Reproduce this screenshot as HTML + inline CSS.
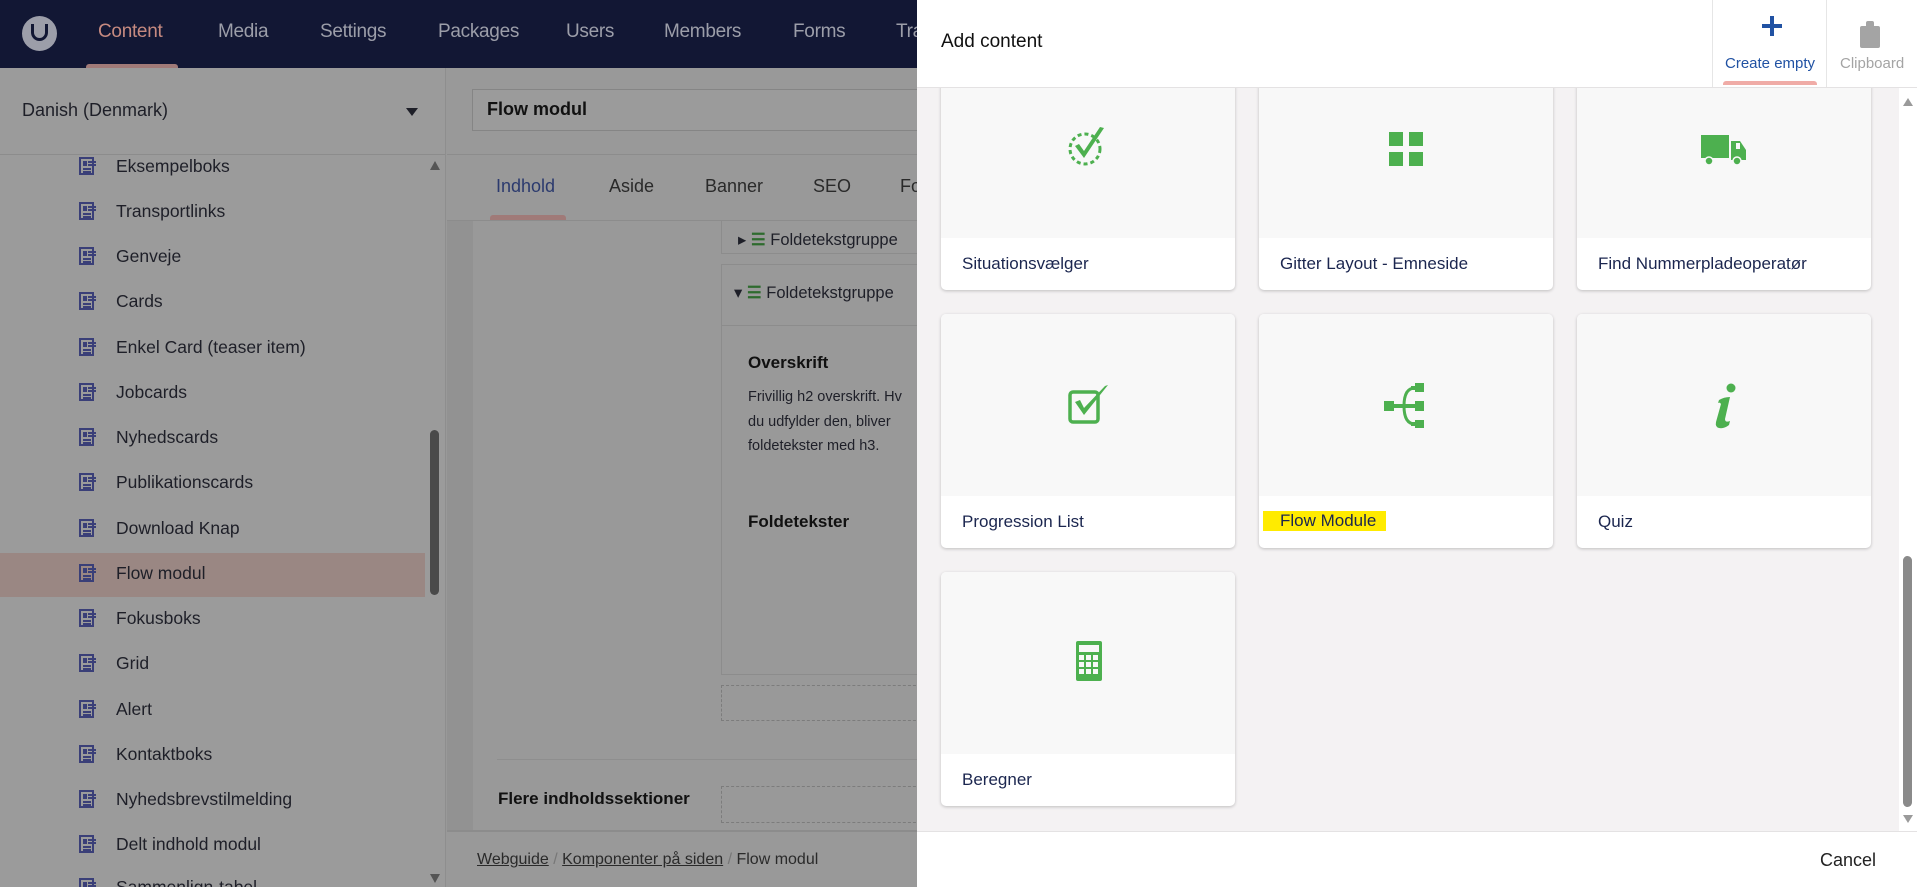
<!DOCTYPE html>
<html><head><meta charset="utf-8"><style>
*{margin:0;padding:0;box-sizing:border-box}
html{width:1917px;height:887px;overflow:hidden}
body{width:1917px;height:887px;overflow:hidden;position:relative;font-family:"Liberation Sans",sans-serif;background:#999}
.abs{position:absolute}
.hdr{left:0;top:0;width:917px;height:68px;background:#121734}
.nav{top:21px;font-size:19px;color:#9c9ea9;letter-spacing:-0.3px}
.left{left:0;top:68px;width:446px;height:819px;background:#9b9b9b;border-right:1px solid #8e8e8e;overflow:hidden}
.ti{left:0;width:425px;height:44px;font-size:17.5px;color:#1e1f28}
.ti .ic{position:absolute;left:79px;top:12px;width:15px;height:18px;border:2px solid #3a3f78;background:#9b9b9b}
.ti .ic:before{content:"";position:absolute;left:2px;top:2px;width:4px;height:5px;background:#3a3f78}
.ti .ic:after{content:"";position:absolute;left:2px;top:9px;width:8px;height:2px;background:#3a3f78;box-shadow:0 3px 0 #3a3f78, 5px -4px 0 #3a3f78,5px -7px 0 #3a3f78}
.ti span{position:absolute;left:116px;top:11px}
.main{left:447px;top:68px;width:470px;height:819px;background:#999;overflow:hidden}
.panel{left:917px;top:0;width:1000px;height:887px;background:#f4f2f3;overflow:hidden}
.card{position:absolute;width:294px;height:234px;background:#fff;border-radius:5px;box-shadow:0 1px 3px rgba(0,0,0,.22);overflow:hidden}
.card .im{position:absolute;left:0;top:0;width:100%;height:182px;background:#f8f8f8}
.card .lb{position:absolute;left:21px;top:198px;font-size:17px;color:#1b264f}
.card svg{position:absolute;left:125px;top:69px}
</style></head><body>
<div class="abs hdr"></div>
<div class="abs" style="left:22px;top:16px;width:35px;height:35px;border-radius:50%;background:#9c9ea9"></div>
<div class="abs" style="left:31px;top:24px;width:17px;height:17px;border:3.5px solid #121734;border-top:none;border-radius:0 0 9px 9px"></div>
<div class="abs nav" style="left:98px;color:#c68a80">Content</div>
<div class="abs" style="left:86px;top:64px;width:92px;height:5px;background:#a07a78;border-radius:3px 3px 0 0"></div>
<div class="abs nav" style="left:218px">Media</div>
<div class="abs nav" style="left:320px">Settings</div>
<div class="abs nav" style="left:438px">Packages</div>
<div class="abs nav" style="left:566px">Users</div>
<div class="abs nav" style="left:664px">Members</div>
<div class="abs nav" style="left:793px">Forms</div>
<div class="abs nav" style="left:896px">Tra</div>

<div class="abs left">
<div class="abs" style="left:22px;top:32px;font-size:18px;color:#1e1f28">Danish (Denmark)</div>
<div class="abs" style="left:406px;top:40px;border-left:6px solid transparent;border-right:6px solid transparent;border-top:8px solid #1e1f28"></div>
<div class="abs" style="left:0;top:86px;width:446px;height:1px;background:#8c8c8c"></div>
<div class="abs" style="left:0;top:485px;width:425px;height:44px;background:#9a8783"></div>
<div class="abs" style="left:430px;top:93px;border-left:5px solid transparent;border-right:5px solid transparent;border-bottom:9px solid #555"></div>
<div class="abs" style="left:430px;top:362px;width:9px;height:165px;background:#4a4a4a;border-radius:5px"></div>
<div class="abs" style="left:430px;top:806px;border-left:5px solid transparent;border-right:5px solid transparent;border-top:9px solid #555"></div>
</div>
<div class="abs ti" style="top:145px"><i class="ic"></i><span>Eksempelboks</span></div>
<div class="abs ti" style="top:190px"><i class="ic"></i><span>Transportlinks</span></div>
<div class="abs ti" style="top:235px"><i class="ic"></i><span>Genveje</span></div>
<div class="abs ti" style="top:280px"><i class="ic"></i><span>Cards</span></div>
<div class="abs ti" style="top:326px"><i class="ic"></i><span>Enkel Card (teaser item)</span></div>
<div class="abs ti" style="top:371px"><i class="ic"></i><span>Jobcards</span></div>
<div class="abs ti" style="top:416px"><i class="ic"></i><span>Nyhedscards</span></div>
<div class="abs ti" style="top:461px"><i class="ic"></i><span>Publikationscards</span></div>
<div class="abs ti" style="top:507px"><i class="ic"></i><span>Download Knap</span></div>
<div class="abs ti" style="top:552px"><i class="ic" style="background:#9a8783"></i><span>Flow modul</span></div>
<div class="abs ti" style="top:597px"><i class="ic"></i><span>Fokusboks</span></div>
<div class="abs ti" style="top:642px"><i class="ic"></i><span>Grid</span></div>
<div class="abs ti" style="top:688px"><i class="ic"></i><span>Alert</span></div>
<div class="abs ti" style="top:733px"><i class="ic"></i><span>Kontaktboks</span></div>
<div class="abs ti" style="top:778px"><i class="ic"></i><span>Nyhedsbrevstilmelding</span></div>
<div class="abs ti" style="top:823px"><i class="ic"></i><span>Delt indhold modul</span></div>
<div class="abs ti" style="top:866px;height:21px;overflow:hidden"><i class="ic"></i><span>Sammenlign-tabel</span></div>

<div class="abs main">
<div class="abs" style="left:25px;top:21px;width:460px;height:42px;border:1px solid #858585;background:#9b9b9b"></div>
<div class="abs" style="left:40px;top:31px;font-size:18px;color:#111;font-weight:bold">Flow modul</div>
<div class="abs" style="left:0;top:86px;width:470px;height:1px;background:#8c8c8c"></div>
<div class="abs" style="left:49px;top:108px;font-size:18px;color:#2b3a6e">Indhold</div>
<div class="abs" style="left:162px;top:108px;font-size:18px;color:#2a2a2a">Aside</div>
<div class="abs" style="left:258px;top:108px;font-size:18px;color:#2a2a2a">Banner</div>
<div class="abs" style="left:366px;top:108px;font-size:18px;color:#2a2a2a">SEO</div>
<div class="abs" style="left:453px;top:108px;font-size:18px;color:#2a2a2a">Fo</div>
<div class="abs" style="left:43px;top:147px;width:76px;height:5px;background:#a07a78;border-radius:3px 3px 0 0"></div>
<div class="abs" style="left:0;top:152px;width:470px;height:1px;background:#8c8c8c"></div>
<div class="abs" style="left:0;top:153px;width:26px;height:610px;background:#929292"></div>
<div class="abs" style="left:274px;top:153px;width:200px;height:33px;border:1px solid #8c8c8c;border-top:none"></div>
<div class="abs" style="left:291px;top:162px;font-size:16.5px;color:#1e1f28">▸ <b style="color:#2e6b2e">☰</b> Foldetekstgruppe</div>
<div class="abs" style="left:274px;top:196px;width:200px;height:411px;border:1px solid #8c8c8c"></div>
<div class="abs" style="left:274px;top:257px;width:200px;height:1px;background:#8c8c8c"></div>
<div class="abs" style="left:287px;top:215px;font-size:16.5px;color:#1e1f28">▾ <b style="color:#2e6b2e">☰</b> Foldetekstgruppe</div>
<div class="abs" style="left:301px;top:285px;font-size:17px;font-weight:bold;color:#111">Overskrift</div>
<div class="abs" style="left:301px;top:317px;font-size:14.5px;line-height:24.5px;color:#1e1f28;width:200px;white-space:nowrap">Frivillig h2 overskrift. Hv<br>du udfylder den, bliver<br>foldetekster med h3.</div>
<div class="abs" style="left:301px;top:444px;font-size:17px;font-weight:bold;color:#111">Foldetekster</div>
<div class="abs" style="left:274px;top:617px;width:200px;height:36px;border:1px dashed #7c7c7c"></div>
<div class="abs" style="left:50px;top:691px;width:420px;height:1px;background:#8e8e8e"></div>
<div class="abs" style="left:51px;top:721px;font-size:17px;font-weight:bold;color:#111">Flere indholdssektioner</div>
<div class="abs" style="left:274px;top:718px;width:200px;height:37px;border:1px dashed #7c7c7c"></div>
<div class="abs" style="left:0;top:762px;width:470px;height:2px;background:#8c8c8c"></div>
<div class="abs" style="left:30px;top:783px;font-size:16px;color:#2a2a2a"><u>Webguide</u> <span style="color:#777">/</span> <u>Komponenter på siden</u> <span style="color:#777">/</span> Flow modul</div>
</div>

<div class="abs panel">
<div class="card" style="left:24px;top:56px"><div class="im"></div><div class="lb">Situationsvælger</div>
<svg width="44" height="44" viewBox="0 0 44 44" style="top:68px"><circle cx="19" cy="25" r="15" fill="none" stroke="#4db04f" stroke-width="3" stroke-dasharray="4 3"/><path d="M9 22l9 12L38 4l-4-1-16 24-5-7z" fill="#4db04f"/></svg></div>
<div class="card" style="left:342px;top:56px"><div class="im"></div><div class="lb">Gitter Layout - Emneside</div>
<svg width="44" height="44" viewBox="0 0 44 44" style="top:71px"><rect x="5" y="5" width="14" height="14" fill="#4db04f"/><rect x="25" y="5" width="14" height="14" fill="#4db04f"/><rect x="5" y="25" width="14" height="14" fill="#4db04f"/><rect x="25" y="25" width="14" height="14" fill="#4db04f"/></svg></div>
<div class="card" style="left:660px;top:56px"><div class="im"></div><div class="lb">Find Nummerpladeoperatør</div>
<svg width="48" height="44" viewBox="0 0 48 44" style="top:71px;left:123px"><rect x="1" y="8" width="28" height="23" fill="#4db04f"/><path d="M31 14h9l6 9v10H31z" fill="#4db04f"/><rect x="36" y="16" width="4" height="6" fill="#f8f8f8"/><circle cx="9" cy="34" r="4" fill="#4db04f" stroke="#f8f8f8" stroke-width="1.5"/><circle cx="37" cy="34" r="4" fill="#4db04f" stroke="#f8f8f8" stroke-width="1.5"/></svg></div>

<div class="card" style="left:24px;top:314px"><div class="im"></div><div class="lb">Progression List</div>
<svg width="48" height="44" viewBox="0 0 48 44" style="top:68px"><rect x="4" y="10" width="28" height="30" rx="3" fill="none" stroke="#4db04f" stroke-width="3.5"/><path d="M9 20l9 13L42 3l-3 1-21 22-4-8z" fill="#4db04f"/></svg></div>
<div class="card" style="left:342px;top:314px"><div class="im"></div><div class="lb" style="left:4px;background:#ffeb00;padding:0 10px 0 17px;top:197px;line-height:20px">Flow Module</div>
<svg width="50" height="46" viewBox="0 0 50 46" style="top:68px;left:122px"><rect x="3" y="19" width="10" height="10" fill="#4db04f"/><rect x="13" y="22" width="12" height="4" fill="#4db04f"/><path d="M34 6q-11 0-11 18t11 18" fill="none" stroke="#4db04f" stroke-width="3"/><rect x="34" y="1" width="9" height="9" fill="#4db04f"/><rect x="34" y="19" width="9" height="10" fill="#4db04f"/><rect x="34" y="38" width="9" height="9" fill="#4db04f"/><rect x="23" y="22" width="11" height="4" fill="#4db04f"/><rect x="30" y="4" width="5" height="4" fill="#4db04f"/><rect x="30" y="40" width="5" height="4" fill="#4db04f"/></svg></div>
<div class="card" style="left:660px;top:314px"><div class="im"></div><div class="lb">Quiz</div>
<svg width="30" height="48" viewBox="0 0 30 48" style="top:68px;left:135px"><circle cx="19" cy="6" r="4.5" fill="#4db04f"/><path d="M7 18q5-3 11-3l-5 22q0 4 5 2l-1 4q-5 4-10 3-4-1-3-6l5-18q-1-2-3-1z" fill="#4db04f"/></svg></div>

<div class="card" style="left:24px;top:572px"><div class="im"></div><div class="lb">Beregner</div>
<svg width="30" height="42" viewBox="0 0 30 42" style="top:68px;left:133px"><rect x="2" y="1" width="26" height="40" rx="2" fill="#4db04f"/><rect x="5" y="5" width="20" height="7" fill="#f8f8f8"/><g fill="#f8f8f8"><rect x="5" y="15" width="5" height="5"/><rect x="12" y="15" width="5" height="5"/><rect x="19" y="15" width="5" height="5"/><rect x="5" y="22" width="5" height="5"/><rect x="12" y="22" width="5" height="5"/><rect x="19" y="22" width="5" height="5"/><rect x="5" y="29" width="5" height="5"/><rect x="12" y="29" width="5" height="5"/><rect x="19" y="29" width="5" height="5"/></g></svg></div>

<div class="abs" style="left:0;top:0;width:1000px;height:88px;background:#fff;border-bottom:1px solid #e4e2e3"></div>
<div class="abs" style="left:24px;top:31px;font-size:19px;color:#111">Add content</div>
<div class="abs" style="left:795px;top:0;width:1px;height:87px;background:#e6e6e6"></div>
<div class="abs" style="left:909px;top:0;width:1px;height:87px;background:#e6e6e6"></div>
<div class="abs" style="left:845px;top:24px;width:20px;height:4px;background:#2152a3"></div>
<div class="abs" style="left:853px;top:16px;width:4px;height:20px;background:#2152a3"></div>
<div class="abs" style="left:808px;top:55px;font-size:15px;color:#2152a3">Create empty</div>
<div class="abs" style="left:806px;top:81px;width:94px;height:4px;background:#f0aca7;border-radius:3px 3px 0 0"></div>
<div class="abs" style="left:943px;top:26px;width:20px;height:22px;background:#a4a4a4;border-radius:2px"></div>
<div class="abs" style="left:949px;top:21px;width:8px;height:6px;background:#a4a4a4;border-radius:2px 2px 0 0"></div>
<div class="abs" style="left:923px;top:55px;font-size:15px;color:#a4a4a4">Clipboard</div>
<div class="abs" style="left:982px;top:88px;width:18px;height:743px;background:#fff"></div>
<div class="abs" style="left:986px;top:98px;border-left:5px solid transparent;border-right:5px solid transparent;border-bottom:8px solid #9a9a9a"></div>
<div class="abs" style="left:986px;top:556px;width:9px;height:251px;background:#8a8a8a;border-radius:5px"></div>
<div class="abs" style="left:986px;top:815px;border-left:5px solid transparent;border-right:5px solid transparent;border-top:8px solid #9a9a9a"></div>
<div class="abs" style="left:0;top:831px;width:1000px;height:56px;background:#fff;border-top:1px solid #e4e2e3"></div>
<div class="abs" style="left:903px;top:850px;font-size:18px;color:#222">Cancel</div>
</div>
</body></html>
